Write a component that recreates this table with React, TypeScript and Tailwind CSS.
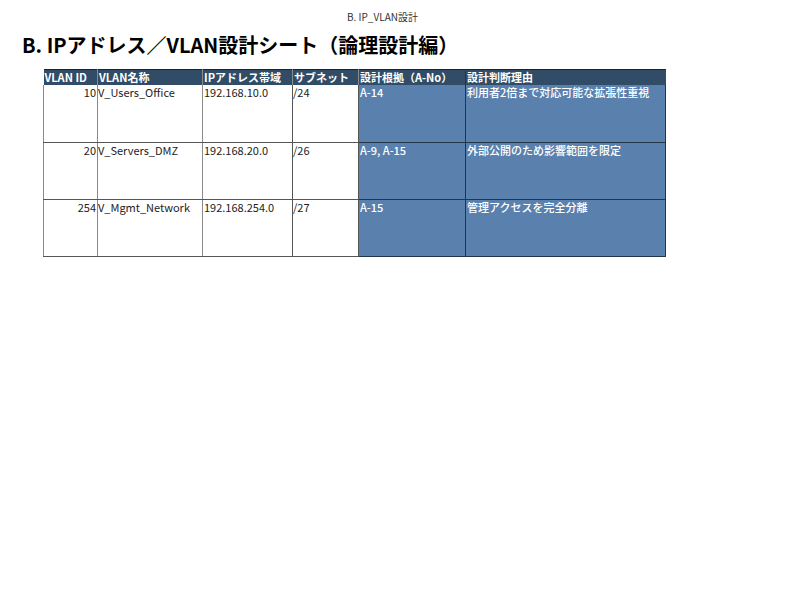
import React from "react";

const rows = [
  { id: "10", name: "V_Users_Office", ip: "192.168.10.0", sub: "/24", basis: "A-14", reason: "利用者2倍まで対応可能な拡張性重視" },
  { id: "20", name: "V_Servers_DMZ", ip: "192.168.20.0", sub: "/26", basis: "A-9, A-15", reason: "外部公開のため影響範囲を限定" },
  { id: "254", name: "V_Mgmt_Network", ip: "192.168.254.0", sub: "/27", basis: "A-15", reason: "管理アクセスを完全分離" },
];

const font = { fontFamily: '"Noto Sans CJK JP", "Noto Sans", sans-serif' };

export default function App() {
  return (
    <div className="w-[800px] h-[600px] bg-white text-black" style={font}>
      <div className="pt-[10px] pl-[347px] text-[10px] leading-[14px] text-[#333]">B. IP_VLAN設計</div>
      <div className="pl-[22px] pt-[8px] text-[20px] leading-[26px] font-bold">B. IPアドレス／VLAN設計シート（論理設計編）</div>
      <div className="pl-[43px] pt-[11px]">
        <table className="border-collapse text-[11px] leading-[15px]">
          <colgroup>
            <col className="w-[54px]" />
            <col className="w-[105px]" />
            <col className="w-[90px]" />
            <col className="w-[66px]" />
            <col className="w-[107px]" />
            <col className="w-[200px]" />
          </colgroup>
          <thead>
            <tr className="h-[15px] bg-[#304c66] text-white font-bold">
              <th className="p-0 pl-[1px] text-left font-bold border-t border-t-[#222] border-r border-r-[#8a8a8a] whitespace-nowrap">VLAN ID</th>
              <th className="p-0 pl-[1px] text-left font-bold border-t border-t-[#222] border-r border-r-[#8a8a8a]">VLAN名称</th>
              <th className="p-0 pl-[1px] text-left font-bold border-t border-t-[#222] border-r border-r-[#8a8a8a]">IPアドレス帯域</th>
              <th className="p-0 pl-[1px] text-left font-bold border-t border-t-[#222] border-r border-r-[#8a8a8a]">サブネット</th>
              <th className="p-0 pl-[1px] text-left font-bold border-t border-t-[#222] border-r border-r-[#22364a]">設計根拠（A-No）</th>
              <th className="p-0 pl-[1px] text-left font-bold border-t border-t-[#222]">設計判断理由</th>
            </tr>
          </thead>
          <tbody>
            {rows.map((r) => (
              <tr key={r.id} className="h-[57px] align-top">
                <td className="p-0 pr-[1px] text-right border-l border-l-[#8a8a8a] border-r border-r-[#8a8a8a] border-b border-b-[#555] text-[#222]">{r.id}</td>
                <td className="p-0 pl-0 border-r border-r-[#8a8a8a] border-b border-b-[#555] text-[#222] whitespace-nowrap">{r.name}</td>
                <td className="p-0 pl-[1px] border-r border-r-[#555] border-b border-b-[#555] text-[#222]">{r.ip}</td>
                <td className="p-0 pl-0 border-r border-r-[#555] border-b border-b-[#555] text-[#222]">{r.sub}</td>
                <td className="p-0 pl-[1px] bg-[#5a81ad] text-white font-medium border-r border-r-[#22364a] border-b border-b-[#22364a]">{r.basis}</td>
                <td className="p-0 pl-[1px] bg-[#5a81ad] text-white font-medium border-r border-r-[#22364a] border-b border-b-[#22364a] whitespace-nowrap">{r.reason}</td>
              </tr>
            ))}
          </tbody>
        </table>
      </div>
    </div>
  );
}
